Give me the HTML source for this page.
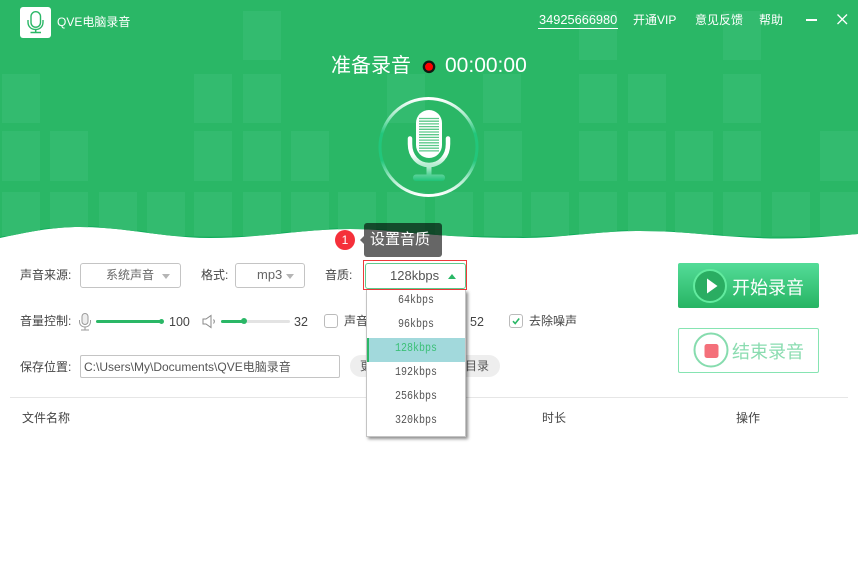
<!DOCTYPE html>
<html lang="zh">
<head>
<meta charset="utf-8">
<title>QVE电脑录音</title>
<style>
html,body{margin:0;padding:0;background:#fff}
#app{position:relative;width:858px;height:566px;overflow:hidden;background:#fff;font-family:"Liberation Sans","Noto Sans CJK SC",sans-serif;font-size:12px;color:#444}
.t{position:absolute;white-space:nowrap;line-height:16px}
.w{color:#fff}
.box{position:absolute;box-sizing:border-box;background:#fff;border:1px solid #c4c4c4;border-radius:3px}
.tri{position:absolute;width:0;height:0;border-left:4px solid transparent;border-right:4px solid transparent;border-top:5px solid #b5b5b5}
.cb{position:absolute;box-sizing:border-box;width:14px;height:14px;border:1px solid #bbb;border-radius:3px;background:#fff}
.it{position:absolute;left:0;width:98px;height:24px;line-height:24px;text-align:center;font-family:"Liberation Mono",monospace;font-size:10px;color:#555}
.it span{display:inline-block;transform:scaleY(1.2)}
svg{position:absolute;display:block}
</style>
</head>
<body>
<div id="app">
<svg style="left:0;top:0" width="858" height="242" viewBox="0 0 858 242">
<defs>
<clipPath id="wc"><path d="M0 238C28 232 52 227 80 227C125 227 165 238 210 238C260 238 305 229 350 229C395 229 430 238 523 238C560 238 600 231 640 231C690 231 730 238.500 780 238.500C810 238.500 835 236 858 234V0H0Z"/></clipPath>
<linearGradient id="ring" x1="0" y1="0" x2="0" y2="1">
<stop offset="0" stop-color="#fff"/><stop offset=".18" stop-color="#a6e9c8"/><stop offset=".36" stop-color="#22c67b"/><stop offset=".64" stop-color="#22c67b"/><stop offset=".82" stop-color="#a6e9c8"/><stop offset="1" stop-color="#fff"/>
</linearGradient>
<linearGradient id="cr" x1="0" y1="0" x2="0" y2="1">
<stop offset="0" stop-color="#fff"/><stop offset=".6" stop-color="#fff"/><stop offset="1" stop-color="#b5ecd0"/>
</linearGradient>
<linearGradient id="stem" x1="0" y1="0" x2="0" y2="1">
<stop offset="0" stop-color="#b5ecd0"/><stop offset="1" stop-color="#4fd093"/>
</linearGradient>
<linearGradient id="base" x1="0" y1="0" x2="0" y2="1">
<stop offset="0" stop-color="#5ed39c"/><stop offset="1" stop-color="#1fc378"/>
</linearGradient>
</defs>
<g clip-path="url(#wc)">
<rect width="858" height="242" fill="#10ac5c"/>
<path d="M0 237C28 231 52 226 80 226C125 226 165 237 210 237C260 237 305 228 350 228C395 228 430 237 523 237C560 237 600 230 640 230C690 230 730 237.500 780 237.500C810 237.500 835 235 858 233V0H0Z" fill="#2ab766"/>
<g fill="#33bb6f">
<rect x="243" y="11" width="38" height="49"/><rect x="579" y="11" width="38" height="49"/><rect x="723" y="11" width="38" height="49"/>
<rect x="2" y="74" width="38" height="49"/><rect x="194" y="74" width="38" height="49"/><rect x="243" y="74" width="38" height="49"/><rect x="387" y="74" width="38" height="49"/><rect x="483" y="74" width="38" height="49"/><rect x="579" y="74" width="38" height="49"/><rect x="628" y="74" width="38" height="49"/><rect x="723" y="74" width="38" height="49"/>
<rect x="2" y="131" width="38" height="50"/><rect x="50" y="131" width="38" height="50"/><rect x="194" y="131" width="38" height="50"/><rect x="243" y="131" width="38" height="50"/><rect x="291" y="131" width="38" height="50"/><rect x="484" y="131" width="38" height="50"/><rect x="579" y="131" width="38" height="50"/><rect x="628" y="131" width="38" height="50"/><rect x="675" y="131" width="38" height="50"/><rect x="723" y="131" width="38" height="50"/><rect x="820" y="131" width="38" height="50"/>
<rect x="2" y="192" width="38" height="44"/><rect x="50" y="192" width="38" height="44"/><rect x="99" y="192" width="38" height="44"/><rect x="147" y="192" width="38" height="44"/><rect x="194" y="192" width="38" height="44"/><rect x="243" y="192" width="38" height="44"/><rect x="291" y="192" width="38" height="44"/><rect x="338" y="192" width="38" height="44"/><rect x="387" y="192" width="38" height="44"/><rect x="435" y="192" width="38" height="44"/><rect x="484" y="192" width="38" height="44"/><rect x="531" y="192" width="38" height="44"/><rect x="579" y="192" width="38" height="44"/><rect x="628" y="192" width="38" height="44"/><rect x="675" y="192" width="38" height="44"/><rect x="723" y="192" width="38" height="44"/><rect x="772" y="192" width="38" height="44"/><rect x="820" y="192" width="38" height="44"/>
</g>
</g>
<!-- big mic -->
<circle cx="428.500" cy="147" r="48.500" fill="none" stroke="url(#ring)" stroke-width="3"/>
<rect x="416" y="110" width="26" height="48" rx="13" fill="#fff"/>
<g stroke="#5cc98b" stroke-width="1.300">
<path d="M419 118.500H439M419 121.200H439M419 123.900H439M419 126.600H439M419 129.300H439M419 132H439M419 134.700H439M419 137.400H439M419 140.100H439M419 142.800H439M419 145.500H439M419 148.200H439M419 150.900H439"/>
</g>
<path d="M410 138.500V144C410 156 418 165 429 165C440 165 448 156 448 144V138.500" fill="none" stroke="url(#cr)" stroke-width="4.500" stroke-linecap="round"/>
<rect x="426.500" y="167" width="5" height="8" fill="url(#stem)"/>
<rect x="413" y="174.500" width="32" height="6.500" rx="3" fill="url(#base)"/>
<!-- rec dot -->
<circle cx="429" cy="66.800" r="6.300" fill="#0d1a12"/><circle cx="429" cy="66.800" r="4" fill="#f00"/>
<!-- window controls -->
<rect x="806" y="19" width="11" height="2" fill="#fff"/>
<path d="M837.500 14.500L847 24M847 14.500L837.500 24" stroke="#fff" stroke-width="1.300" fill="none"/>
</svg>

<!-- logo -->
<div style="position:absolute;left:20px;top:7px;width:31px;height:31px;background:#fff;border-radius:3px"></div>
<svg style="left:20px;top:7px" width="31" height="31" viewBox="0 0 31 31" fill="none" stroke="#2ab766" stroke-width="1.400">
<rect x="11" y="4.700" width="9.500" height="15.500" rx="4.700"/>
<path d="M8 13V15C8 19.500 11 22.500 15.700 22.500C20 22.500 23 19.500 23 15V13"/>
<path d="M15.700 22.500V25.300M10.500 25.500H21" stroke-width="1.500"/>
</svg>
<div class="t w" style="left:57px;top:14px;font-size:12px">QVE电脑录音</div>

<div class="t w" style="left:539px;top:12px;font-size:12.800px">34925666980</div>
<div style="position:absolute;left:538px;top:28px;width:80px;height:1px;background:#fff"></div>
<div class="t w" style="left:633px;top:12px">开通VIP</div>
<div class="t w" style="left:695px;top:12px">意见反馈</div>
<div class="t w" style="left:759px;top:12px">帮助</div>

<div class="t w" style="left:331px;top:52px;font-size:20px;line-height:28px">准备录音</div>
<div class="t w" style="left:445px;top:52px;font-size:21px;line-height:28px">00:00:00</div>

<!-- row 1 -->
<div class="t" style="left:20px;top:267px">声音来源:</div>
<div class="box" style="left:80px;top:263px;width:101px;height:25px"></div>
<div class="t" style="left:106px;top:267px;color:#666">系统声音</div>
<div class="tri" style="left:162px;top:274px"></div>
<div class="t" style="left:201px;top:267px">格式:</div>
<div class="box" style="left:235px;top:263px;width:70px;height:25px"></div>
<div class="t" style="left:257px;top:267px;color:#666;font-size:13px">mp3</div>
<div class="tri" style="left:286px;top:274px"></div>
<div class="t" style="left:325px;top:267px">音质:</div>

<!-- row 2 -->
<div class="t" style="left:20px;top:313px">音量控制:</div>
<svg style="left:78px;top:312px" width="14" height="19" viewBox="0 0 14 19" fill="none" stroke="#9a9a9a" stroke-width="1">
<rect x="4" y="1.500" width="6" height="11" rx="3" fill="#eee"/>
<path d="M1.500 8V9.500C1.500 13 4 15 7 15C10 15 12.500 13 12.500 9.500V8M7 15V17.500M3 18H11"/>
</svg>
<div style="position:absolute;left:96px;top:320px;width:65px;height:3px;background:#2ab766;border-radius:2px"></div>
<div style="position:absolute;left:159px;top:319px;width:5px;height:5px;background:#2ab766;border-radius:50%"></div>
<div class="t" style="left:169px;top:314px;font-size:12.500px">100</div>
<svg style="left:202px;top:314px" width="16" height="15" viewBox="0 0 16 15" fill="none" stroke="#8a8a8a" stroke-width="1">
<path d="M1 5H4L9 1.500V13.500L4 10H1Z"/><path d="M11.500 5.500C12.500 6.700 12.500 8.300 11.500 9.500"/>
</svg>
<div style="position:absolute;left:221px;top:320px;width:69px;height:3px;background:#e3e3e3;border-radius:2px"></div>
<div style="position:absolute;left:221px;top:320px;width:22px;height:3px;background:#2ab766;border-radius:2px"></div>
<div style="position:absolute;left:241px;top:318px;width:6px;height:6px;background:#2ab766;border-radius:50%"></div>
<div class="t" style="left:294px;top:314px;font-size:12.500px">32</div>
<div class="cb" style="left:324px;top:314px"></div>
<div class="t" style="left:344px;top:313px">声音</div>
<div class="t" style="left:470px;top:314px;font-size:12.500px">52</div>
<div class="cb" style="left:509px;top:314px"></div>
<svg style="left:509px;top:314px" width="14" height="14" viewBox="0 0 14 14" fill="none" stroke="#2ab766" stroke-width="1.600"><path d="M4 7.200L6.200 9.500L10.200 4.500"/></svg>
<div class="t" style="left:529px;top:313px">去除噪声</div>

<!-- row 3 -->
<div class="t" style="left:20px;top:359px">保存位置:</div>
<div class="box" style="left:80px;top:355px;width:260px;height:23px;border-radius:2px"></div>
<div class="t" style="left:84px;top:359px;color:#555">C:\Users\My\Documents\QVE电脑录音</div>
<div style="position:absolute;left:350px;top:355px;width:150px;height:22px;background:#eee;border-radius:11px"></div>
<div class="t" style="left:360px;top:358px;color:#555">更</div>
<div class="t" style="left:465px;top:358px;color:#555">目录</div>

<!-- table header -->
<div style="position:absolute;left:10px;top:397px;width:838px;height:1px;background:#e6e6e6"></div>
<div class="t" style="left:22px;top:410px">文件名称</div>
<div class="t" style="left:542px;top:410px">时长</div>
<div class="t" style="left:736px;top:410px">操作</div>

<!-- tooltip -->
<div style="position:absolute;left:335px;top:230px;width:20px;height:20px;border-radius:50%;background:#f5303a;color:#fff;text-align:center;line-height:20px;font-size:12px">1</div>
<div style="position:absolute;left:360px;top:236px;width:0;height:0;border-top:4px solid transparent;border-bottom:4px solid transparent;border-right:4px solid #666"></div>
<div style="position:absolute;left:364px;top:223px;width:78px;height:34px;border-radius:3px;background:rgba(0,0,0,.6);color:#fff;font-size:15px;line-height:33px;text-indent:6px">设置音质</div>

<!-- quality select -->
<div style="position:absolute;box-sizing:border-box;left:363px;top:260px;width:104px;height:30px;border:1px solid #ee3a3a"></div>
<div class="box" style="left:365px;top:263px;width:101px;height:26px;border-color:#5fcb8e"></div>
<div class="t" style="left:390px;top:268px;color:#555;font-size:13px">128kbps</div>
<div style="position:absolute;left:448px;top:274px;width:0;height:0;border-left:4px solid transparent;border-right:4px solid transparent;border-bottom:5px solid #2ab766"></div>

<!-- dropdown -->
<div style="position:absolute;box-sizing:border-box;left:366px;top:290px;width:100px;height:147px;background:#fff;border:1px solid #c4c4c4;border-top:0;box-shadow:2px 2px 3px rgba(0,0,0,.45)">
<div class="it" style="top:0"><span>64kbps</span></div>
<div class="it" style="top:24px"><span>96kbps</span></div>
<div class="it" style="top:48px;background:#a2d9dc;color:#3cc078;box-shadow:inset 2px 0 0 #2ab766"><span>128kbps</span></div>
<div class="it" style="top:72px"><span>192kbps</span></div>
<div class="it" style="top:96px"><span>256kbps</span></div>
<div class="it" style="top:120px"><span>320kbps</span></div>
</div>

<!-- start button -->
<div style="position:absolute;left:678px;top:263px;width:141px;height:45px;border-radius:2px;background:linear-gradient(#54dc98,#27b463)"></div>
<svg style="left:691px;top:266px" width="40" height="40" viewBox="0 0 40 40">
<circle cx="19" cy="20" r="16" fill="#2aad62" stroke="#62eb9f" stroke-width="2"/>
<path d="M16 12.500L26.500 20L16 27.500Z" fill="#fff"/>
</svg>
<div class="t w" style="left:732px;top:276px;font-size:18px;line-height:24px">开始录音</div>

<!-- stop button -->
<div style="position:absolute;box-sizing:border-box;left:678px;top:328px;width:141px;height:45px;border-radius:2px;border:1px solid #86e4b2;background:#fff"></div>
<svg style="left:691.500px;top:330px" width="40" height="40" viewBox="0 0 40 40">
<circle cx="19" cy="20" r="16.500" fill="#fff" stroke="#86dcae" stroke-width="2"/>
<rect x="12.500" y="14" width="14" height="14" rx="2.500" fill="#f4707a"/>
</svg>
<div class="t" style="left:732px;top:340px;font-size:18px;line-height:24px;color:#8adcb0">结束录音</div>
</div>
</body>
</html>
